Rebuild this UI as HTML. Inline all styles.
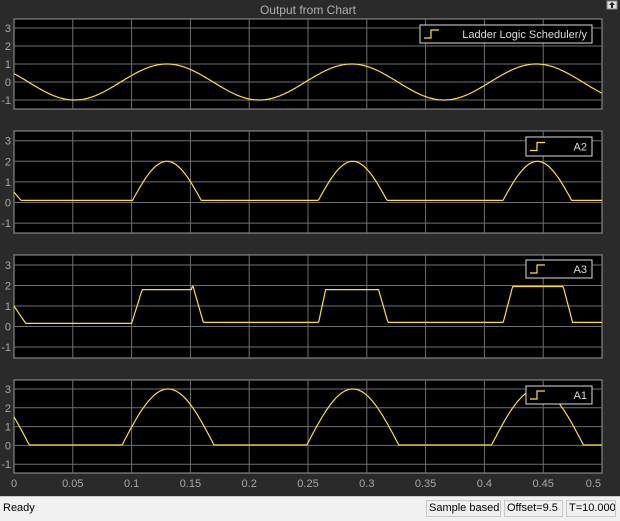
<!DOCTYPE html>
<html><head><meta charset="utf-8"><style>
html,body{margin:0;padding:0;width:620px;height:520px;overflow:hidden;background:#2a2a2a;font-family:"Liberation Sans",sans-serif}
#sb{position:absolute;left:0;top:496px;width:620px;height:24px;background:#f0f0f0;border-top:1px solid #c8c8c8;font-size:11px;color:#000}
.cell{position:absolute;top:3px;height:17px;line-height:15px;border:1px solid #c8c8c8;background:#f0f0f0;padding:0 2px;box-sizing:border-box;white-space:nowrap;overflow:hidden}
</style></head><body>
<svg id="s" width="620" height="496" style="position:absolute;left:0;top:0" font-family="Liberation Sans, sans-serif"></svg>
<div id="sb"><span style="position:absolute;left:3px;top:5px">Ready</span>
<div class="cell" style="left:426px;width:75px">Sample based</div>
<div class="cell" style="left:504px;width:59px">Offset=9.5</div>
<div class="cell" style="left:566px;width:50px">T=10.000</div></div>
<script>
var s=document.getElementById('s');var h='';
h+='<text x="308" y="14" fill="#b0b0b0" font-size="12" text-anchor="middle">Output from Chart</text>';
h+='<rect x="607" y="1" width="10" height="8" fill="#ddd" stroke="#888"/><path d="M612 2 L609 5 H615 Z M611 5 V8 H613 V5" fill="#222"/>';
var X0=14,X1=602;function X(t){return X0+t/0.5*(X1-X0);}
var P=[{top:19,bot:109,y3:28,u:18,leg:[420,25,592,43],name:'Ladder Logic Scheduler/y'},
{top:131,bot:233,y3:140.7,u:20.6,leg:[526,137,592,156],name:'A2'},
{top:255,bot:358,y3:265,u:20.5,leg:[526,260,592,278],name:'A3'},
{top:380,bot:473,y3:389,u:18.8,leg:[526,386,592,404],name:'A1'}];
function f1(t){return Math.cos(40*(t-0.13));}
function f2(t){if(t<0.006)return 0.5-t/0.006*0.4;var cs=[0.13,0.288,0.445],v=0.1;cs.forEach(function(c){v=Math.max(v,2*Math.cos(Math.min(1.6,Math.abs(52*(t-c)))));});return v;}
function lin(pts,t){for(var i=0;i<pts.length-1;i++){if(t>=pts[i][0]&&t<=pts[i+1][0]){var a=pts[i],b=pts[i+1];return a[1]+(b[1]-a[1])*(t-a[0])/(b[0]-a[0]||1);}}return pts[pts.length-1][1];}
var p3=[[0,1],[0.01,0.15],[0.1,0.15],[0.109,1.8],[0.151,1.8],[0.152,2.05],[0.153,1.8],[0.161,0.2],[0.259,0.2],[0.265,1.8],[0.31,1.8],[0.318,0.2],[0.416,0.2],[0.424,1.95],[0.467,1.95],[0.475,0.2],[0.5,0.2]];
function f3(t){return lin(p3,t);}
function f4b(t){var v=3*Math.cos(40*(t-0.131));return Math.max(0.02,v);}
var fs=[f1,f2,f3,f4b];
P.forEach(function(p,i){
 h+='<rect x="'+X0+'" y="'+p.top+'" width="'+(X1-X0)+'" height="'+(p.bot-p.top)+'" fill="#000" stroke="#9a9a9a" stroke-width="1"/>';
 for(var k=1;k<10;k++){var x=X(k*0.05);h+='<line x1="'+x+'" y1="'+p.top+'" x2="'+x+'" y2="'+p.bot+'" stroke="#707070" stroke-width="1"/>';}
 for(var v=-1;v<=3;v++){var y=p.y3-(v-3)*p.u;h+='<line x1="'+X0+'" y1="'+y+'" x2="'+X1+'" y2="'+y+'" stroke="#707070" stroke-width="1"/>';
  h+='<text x="11" y="'+(y+4)+'" fill="#a8a8a8" font-size="11" text-anchor="end">'+v+'</text>';}
 var d='';for(var j=0;j<=600;j++){var t=j/1200;var y=p.y3-(fs[i](t)-3)*p.u;d+=(j?'L':'M')+X(t).toFixed(1)+' '+y.toFixed(1);}
 h+='<path d="'+d+'" fill="none" stroke="#ffe033" stroke-width="1.2"/>';
 var L=p.leg;h+='<rect x="'+L[0]+'" y="'+L[1]+'" width="'+(L[2]-L[0])+'" height="'+(L[3]-L[1])+'" fill="#000" stroke="#ddd"/>';
 var my=(L[1]+L[3])/2;h+='<path d="M'+(L[0]+4)+' '+(my+4)+'H'+(L[0]+11)+'V'+(my-4)+'H'+(L[0]+19)+'" fill="none" stroke="#ffe033" stroke-width="1.2"/>';
 h+='<text x="'+(L[2]-5)+'" y="'+(my+4)+'" fill="#ddd" font-size="11" text-anchor="end">'+p.name+'</text>';
});
var lb=['0','0.05','0.1','0.15','0.2','0.25','0.3','0.35','0.4','0.45','0.5'];
lb.forEach(function(l,k){h+='<text x="'+(k==10?X1-1:X(k*0.05))+'" y="487" fill="#a8a8a8" font-size="11" text-anchor="'+(k==10?'end':'middle')+'">'+l+'</text>';});
s.innerHTML=h;
</script>
</body></html>
